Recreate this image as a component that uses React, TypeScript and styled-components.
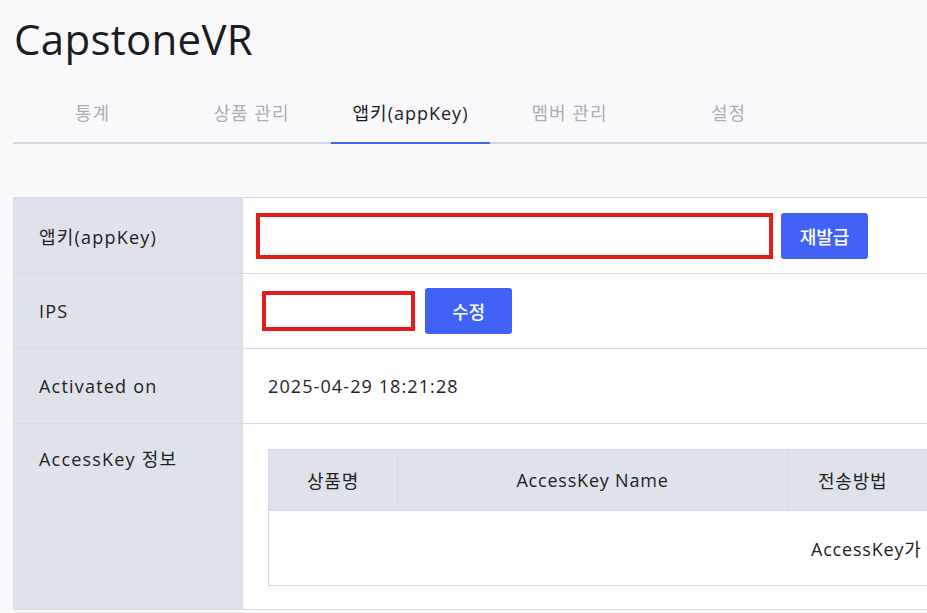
import React from 'react';
import styled, { createGlobalStyle } from 'styled-components';

const GlobalStyle = createGlobalStyle`
  html, body {
    margin: 0;
    padding: 0;
    background: #f9f9fb;
    overflow: hidden;
  }
  body {
    font-family: "Open Sans", "Noto Sans CJK KR", sans-serif;
    color: #222;
  }
`;

const Page = styled.div`
  width: 1600px;
  padding: 0 0 0 13px;
`;

const Title = styled.h1`
  margin: 0;
  padding: 11px 0 0 1px;
  font-size: 42px;
  font-weight: 400;
  line-height: 56px;
  color: #1b1d24;
  letter-spacing: 0.3px;
`;

const TabBar = styled.nav`
  display: flex;
  margin-top: 21px;
  border-bottom: 2px solid #d3d6e2;
`;

const Tab = styled.div<{ $active?: boolean }>`
  width: 159px;
  height: 48px;
  padding-bottom: 6px;
  display: flex;
  align-items: center;
  justify-content: center;
  font-size: 18px;
  letter-spacing: 1px;
  color: ${(p) => (p.$active ? '#1b1d24' : '#a9adb9')};
  border-bottom: 2px solid ${(p) => (p.$active ? '#4263eb' : 'transparent')};
  margin-bottom: -2px;
`;

const InfoTable = styled.div`
  margin-top: 53px;
  display: grid;
  grid-template-columns: 229px 1fr;
  border-top: 1px solid #d6d9e1;
  border-left: 1px solid #d6d9e1;
`;

const Label = styled.div<{ $top?: boolean }>`
  background: #dfe2ea;
  border-bottom: 1px solid #d6d9e1;
  border-right: 1px solid #d6d9e1;
  display: flex;
  align-items: ${(p) => (p.$top ? 'flex-start' : 'center')};
  padding: ${(p) => (p.$top ? '21px 0 0 25px' : '0 0 0 25px')};
  font-size: 18px;
  letter-spacing: 1.2px;
  color: #222;
`;

const Value = styled.div<{ $h: number; $pad?: number }>`
  background: #fff;
  border-bottom: 1px solid #d6d9e1;
  height: ${(p) => p.$h}px;
  box-sizing: border-box;
  display: flex;
  align-items: center;
  padding-left: ${(p) => p.$pad ?? 25}px;
  font-size: 18px;
  letter-spacing: 1.1px;
  color: #222;
`;

const Redacted = styled.div<{ $w: number; $h: number }>`
  width: ${(p) => p.$w}px;
  height: ${(p) => p.$h}px;
  box-sizing: border-box;
  border: 4px solid #e31c1c;
  background: #fff;
`;

const Button = styled.button<{ $gap: number }>`
  margin-left: ${(p) => p.$gap}px;
  width: 87px;
  height: 46px;
  border: none;
  border-radius: 3px;
  background: #4262f7;
  color: #fff;
  font-family: "Noto Sans CJK KR", sans-serif;
  font-size: 18px;
  font-weight: 500;
`;

const KeyCell = styled.div`
  background: #fff;
  border-bottom: 1px solid #d6d9e1;
  height: 186px;
  box-sizing: border-box;
  padding: 25px 0 0 25px;
`;

const KeyTable = styled.div`
  width: 1350px;
  border: 1px solid #d6d9e1;
  display: grid;
  grid-template-columns: 129px 390px 180px 1fr;
`;

const HeadCell = styled.div`
  height: 60px;
  background: #dfe2ea;
  border-right: 1px solid #d6d9e1;
  border-bottom: 1px solid #d6d9e1;
  display: flex;
  align-items: center;
  justify-content: center;
  font-size: 18px;
  letter-spacing: 0.8px;
  color: #222;
`;

const MethodHead = styled(HeadCell)`
  justify-content: flex-start;
  padding-left: 30px;
`;

const EmptyRow = styled.div`
  grid-column: 1 / -1;
  height: 74px;
  display: flex;
  align-items: center;
  justify-content: center;
  font-size: 18px;
  letter-spacing: 0.8px;
  color: #222;
`;

const tabs = ['통계', '상품 관리', '앱키(appKey)', '멤버 관리', '설정'];

const App: React.FC = () => {
  return (
    <Page>
      <GlobalStyle />
      <Title>CapstoneVR</Title>
      <TabBar>
        {tabs.map((t) => (
          <Tab key={t} $active={t === '앱키(appKey)'}>
            {t}
          </Tab>
        ))}
      </TabBar>
      <InfoTable>
        <Label>앱키(appKey)</Label>
        <Value $h={76} $pad={13}>
          <Redacted $w={517} $h={46} />
          <Button $gap={8}>재발급</Button>
        </Value>
        <Label>IPS</Label>
        <Value $h={75} $pad={19}>
          <Redacted $w={153} $h={40} />
          <Button $gap={10}>수정</Button>
        </Value>
        <Label>Activated on</Label>
        <Value $h={75}>2025-04-29 18:21:28</Value>
        <Label $top>AccessKey 정보</Label>
        <KeyCell>
          <KeyTable>
            <HeadCell>상품명</HeadCell>
            <HeadCell>AccessKey Name</HeadCell>
            <MethodHead>전송방법</MethodHead>
            <HeadCell>상태</HeadCell>
            <EmptyRow>AccessKey가 존재하지 않습니다.</EmptyRow>
          </KeyTable>
        </KeyCell>
      </InfoTable>
    </Page>
  );
};

export default App;
